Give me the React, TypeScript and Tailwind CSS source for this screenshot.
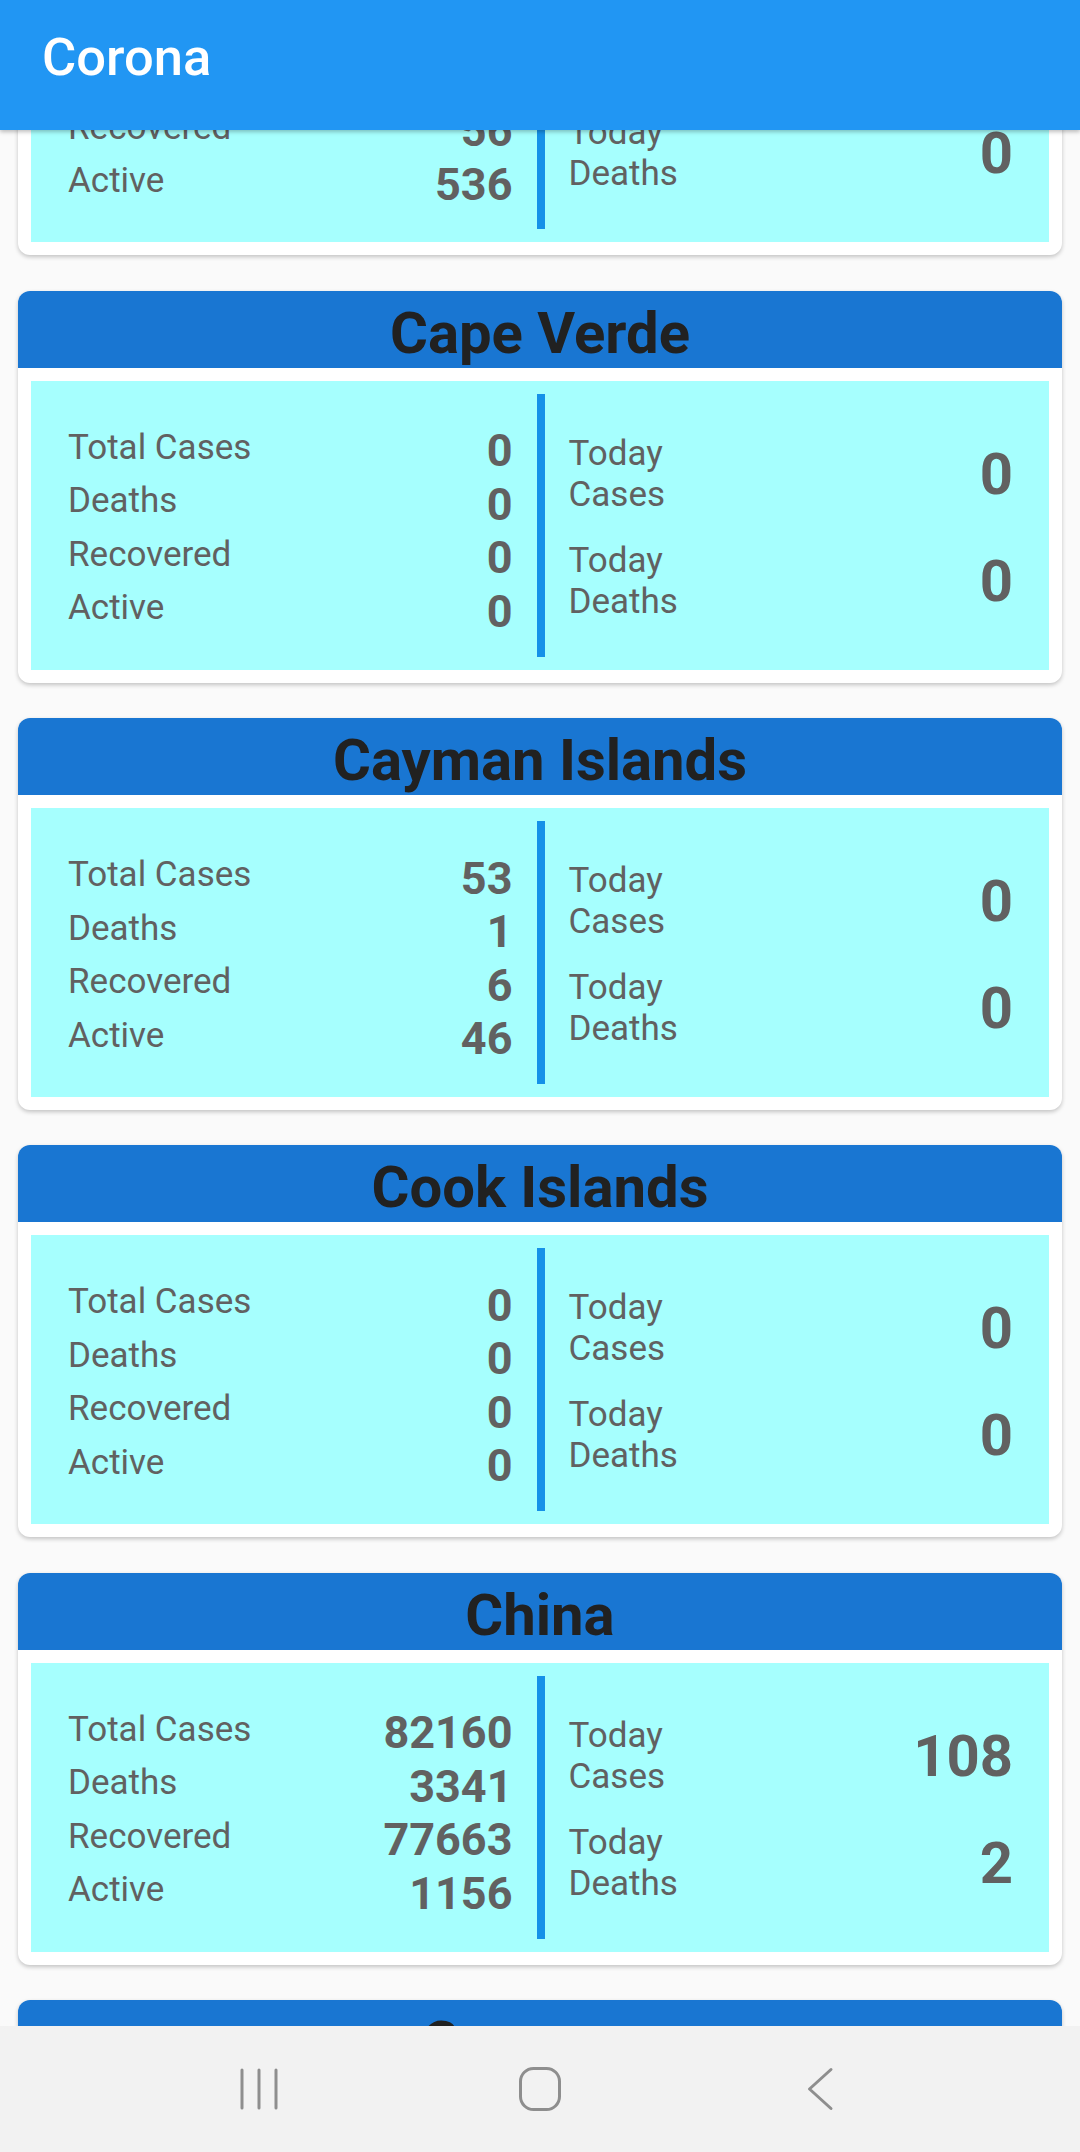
import React from "react";

type Country = {
  name: string;
  total: string;
  deaths: string;
  recovered: string;
  active: string;
  todayCases: string;
  todayDeaths: string;
};

const countries: Country[] = [
  { name: "Cameroon", total: "601", deaths: "9", recovered: "56", active: "536", todayCases: "0", todayDeaths: "0" },
  { name: "Cape Verde", total: "0", deaths: "0", recovered: "0", active: "0", todayCases: "0", todayDeaths: "0" },
  { name: "Cayman Islands", total: "53", deaths: "1", recovered: "6", active: "46", todayCases: "0", todayDeaths: "0" },
  { name: "Cook Islands", total: "0", deaths: "0", recovered: "0", active: "0", todayCases: "0", todayDeaths: "0" },
  { name: "China", total: "82160", deaths: "3341", recovered: "77663", active: "1156", todayCases: "108", todayDeaths: "2" },
  { name: "Comoros", total: "0", deaths: "0", recovered: "0", active: "0", todayCases: "0", todayDeaths: "0" },
];

function StatRow({ label, value }: { label: string; value: string }) {
  return (
    <div className="h-[53.5px] flex justify-between items-start shrink-0">
      <span className="text-[35px] leading-[41px] mt-[2.5px] text-[#616161] whitespace-nowrap">{label}</span>
      <span className="text-[45px] leading-[53px] font-bold text-[#616161]">{value}</span>
    </div>
  );
}

function TodayBlock({ first, second, value }: { first: string; second: string; value: string }) {
  return (
    <div className="flex items-center justify-between">
      <div className="flex flex-col text-[35px] leading-[41px] text-[#616161]">
        <span>{first}</span>
        <span>{second}</span>
      </div>
      <span className="text-[58px] leading-[68px] font-bold text-[#616161]">{value}</span>
    </div>
  );
}

function CountryCard({ c }: { c: Country }) {
  return (
    <div className="rounded-[12px] bg-white overflow-hidden shadow-[0_2px_4px_rgba(0,0,0,0.22)] shrink-0">
      <div className="h-[77px] bg-[#1976d2] text-center pt-[8px]">
        <span className="text-[58px] leading-[68px] font-bold text-[#212121]">{c.name}</span>
      </div>
      <div className="p-[13px]">
        <div className="h-[289px] bg-[#a6fffe] flex py-[13px]">
          <div className="flex-1 flex flex-col pl-[37px] pr-[24px] pt-[30.6px]">
            <StatRow label="Total Cases" value={c.total} />
            <StatRow label="Deaths" value={c.deaths} />
            <StatRow label="Recovered" value={c.recovered} />
            <StatRow label="Active" value={c.active} />
          </div>
          <div className="w-[8px] bg-[#1591e8] self-stretch" />
          <div className="flex-1 flex flex-col justify-center gap-[25px] pl-[24px] pr-[36px] pt-[4px]">
            <TodayBlock first="Today" second="Cases" value={c.todayCases} />
            <TodayBlock first="Today" second="Deaths" value={c.todayDeaths} />
          </div>
        </div>
      </div>
    </div>
  );
}

export default function App() {
  return (
    <div className="w-[1080px] h-[2152px] flex flex-col overflow-hidden bg-[#fafafa] font-['Roboto',sans-serif]">
      <div className="h-[130px] shrink-0 bg-[#2196f3] relative z-10 shadow-[0_2px_4px_rgba(0,0,0,0.25)] pl-[42px] pt-[27px]">
        <span className="text-[52.5px] leading-[61px] font-medium text-white">Corona</span>
      </div>
      <div className="flex-1 overflow-hidden relative">
        <div className="flex flex-col gap-[35.3px] px-[18px] mt-[-266.6px]">
          {countries.map((c) => (
            <CountryCard key={c.name} c={c} />
          ))}
        </div>
      </div>
      <div className="h-[126px] shrink-0 bg-[#f2f2f2] relative z-10 flex items-center justify-center">
        <div className="w-[281px] flex justify-center">
          <svg width="44" height="42" viewBox="0 0 44 42" fill="none" stroke="#8e8e8e" strokeWidth="3" strokeLinecap="round">
            <line x1="5" y1="2" x2="5" y2="40" />
            <line x1="22" y1="2" x2="22" y2="40" />
            <line x1="39" y1="2" x2="39" y2="40" />
          </svg>
        </div>
        <div className="w-[281px] flex justify-center">
          <svg width="44" height="46" viewBox="0 0 44 46" fill="none" stroke="#8e8e8e" strokeWidth="3">
            <rect x="2.5" y="2.5" width="39" height="41" rx="13" />
          </svg>
        </div>
        <div className="w-[281px] flex justify-center">
          <svg width="28" height="44" viewBox="0 0 28 44" fill="none" stroke="#8e8e8e" strokeWidth="3" strokeLinecap="round" strokeLinejoin="round">
            <polyline points="24,2.5 2.5,22 24,41.5" />
          </svg>
        </div>
      </div>
    </div>
  );
}
